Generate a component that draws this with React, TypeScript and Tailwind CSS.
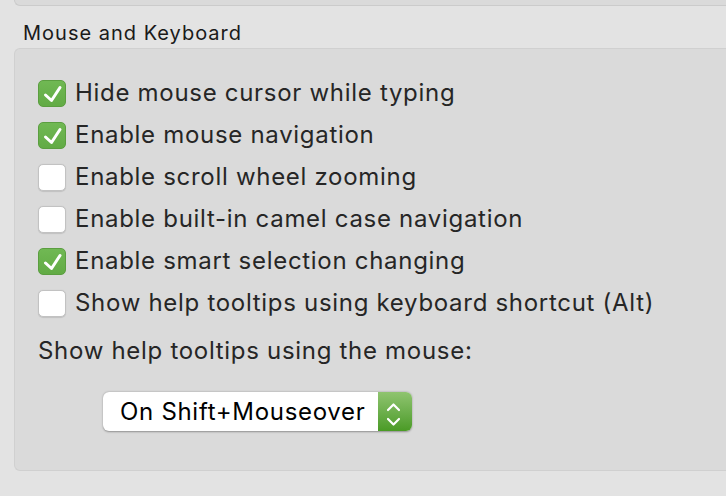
import React from "react";

const options = [
  { label: "Hide mouse cursor while typing", checked: true },
  { label: "Enable mouse navigation", checked: true },
  { label: "Enable scroll wheel zooming", checked: false },
  { label: "Enable built-in camel case navigation", checked: false },
  { label: "Enable smart selection changing", checked: true },
  { label: "Show help tooltips using keyboard shortcut (Alt)", checked: false },
];

const Checkbox = ({ checked }: { checked: boolean }) => {
  if (checked) {
    return (
      <div className="relative w-[28px] h-[27px] rounded-[5px] bg-gradient-to-b from-[#70b853] to-[#62ab45] border border-[#5b9e40] shrink-0">
        <svg className="absolute left-0 top-0" width="28" height="27" viewBox="0 0 28 27" fill="none">
          <path d="M6.5 14 L12.5 19.5 L21 6.5" stroke="white" strokeWidth="3" strokeLinecap="round" strokeLinejoin="round" />
        </svg>
      </div>
    );
  }
  return <div className="w-[28px] h-[27px] rounded-[5px] bg-white border border-[#c2c2c2] shadow-[0_0.5px_1px_rgba(0,0,0,0.12)] shrink-0" />;
};

export default function App() {
  return (
    <div
      className="w-[726px] h-[496px] bg-[#e3e3e3] overflow-hidden flex flex-col"
      style={{ fontFamily: "Inter, 'Liberation Sans', sans-serif" }}
    >
      <div className="ml-[14px] h-[6px] bg-[#dadada] border-b border-l border-[#cbcbcb] rounded-bl-[6px] shrink-0" />
      <div className="pl-[23px] pt-[15px] pb-[3px] text-[20px] leading-[24px] tracking-[1px] text-[#1a1a1a]">Mouse and Keyboard</div>
      <div className="ml-[14px] h-[423px] bg-[#dadada] border border-r-0 border-[#d0d0d0] rounded-l-[6px] pl-[23px] pt-[23px] shrink-0">
        <div className="flex flex-col">
          {options.map((o) => (
            <div key={o.label} className="flex items-center gap-[9px] h-[42px]">
              <Checkbox checked={o.checked} />
              <span className="text-[24px] tracking-[0.7px] text-[#262626] leading-none">{o.label}</span>
            </div>
          ))}
        </div>
        <div className="mt-[11px] text-[24px] tracking-[0.7px] text-[#262626] leading-[32px]">Show help tooltips using the mouse:</div>
        <div className="mt-[25px] ml-[65px] w-[309px] h-[39px] flex rounded-[6px] bg-white shadow-[0_0.5px_2px_rgba(0,0,0,0.35)] overflow-hidden">
          <div className="flex-1 flex items-center pl-[17px] text-[24px] tracking-[0.7px] text-black">On Shift+Mouseover</div>
          <div className="relative w-[34px] bg-gradient-to-b from-[#8fc46f] to-[#4a9b24]">
            <svg className="absolute left-0 top-0" width="34" height="39" viewBox="0 0 34 39" fill="none">
              <path d="M10 18 L15.5 12.5 L21 18" stroke="white" strokeWidth="2.2" strokeLinecap="round" strokeLinejoin="round" />
              <path d="M10 27 L15.5 32.5 L21 27" stroke="white" strokeWidth="2.2" strokeLinecap="round" strokeLinejoin="round" />
            </svg>
          </div>
        </div>
      </div>
    </div>
  );
}
